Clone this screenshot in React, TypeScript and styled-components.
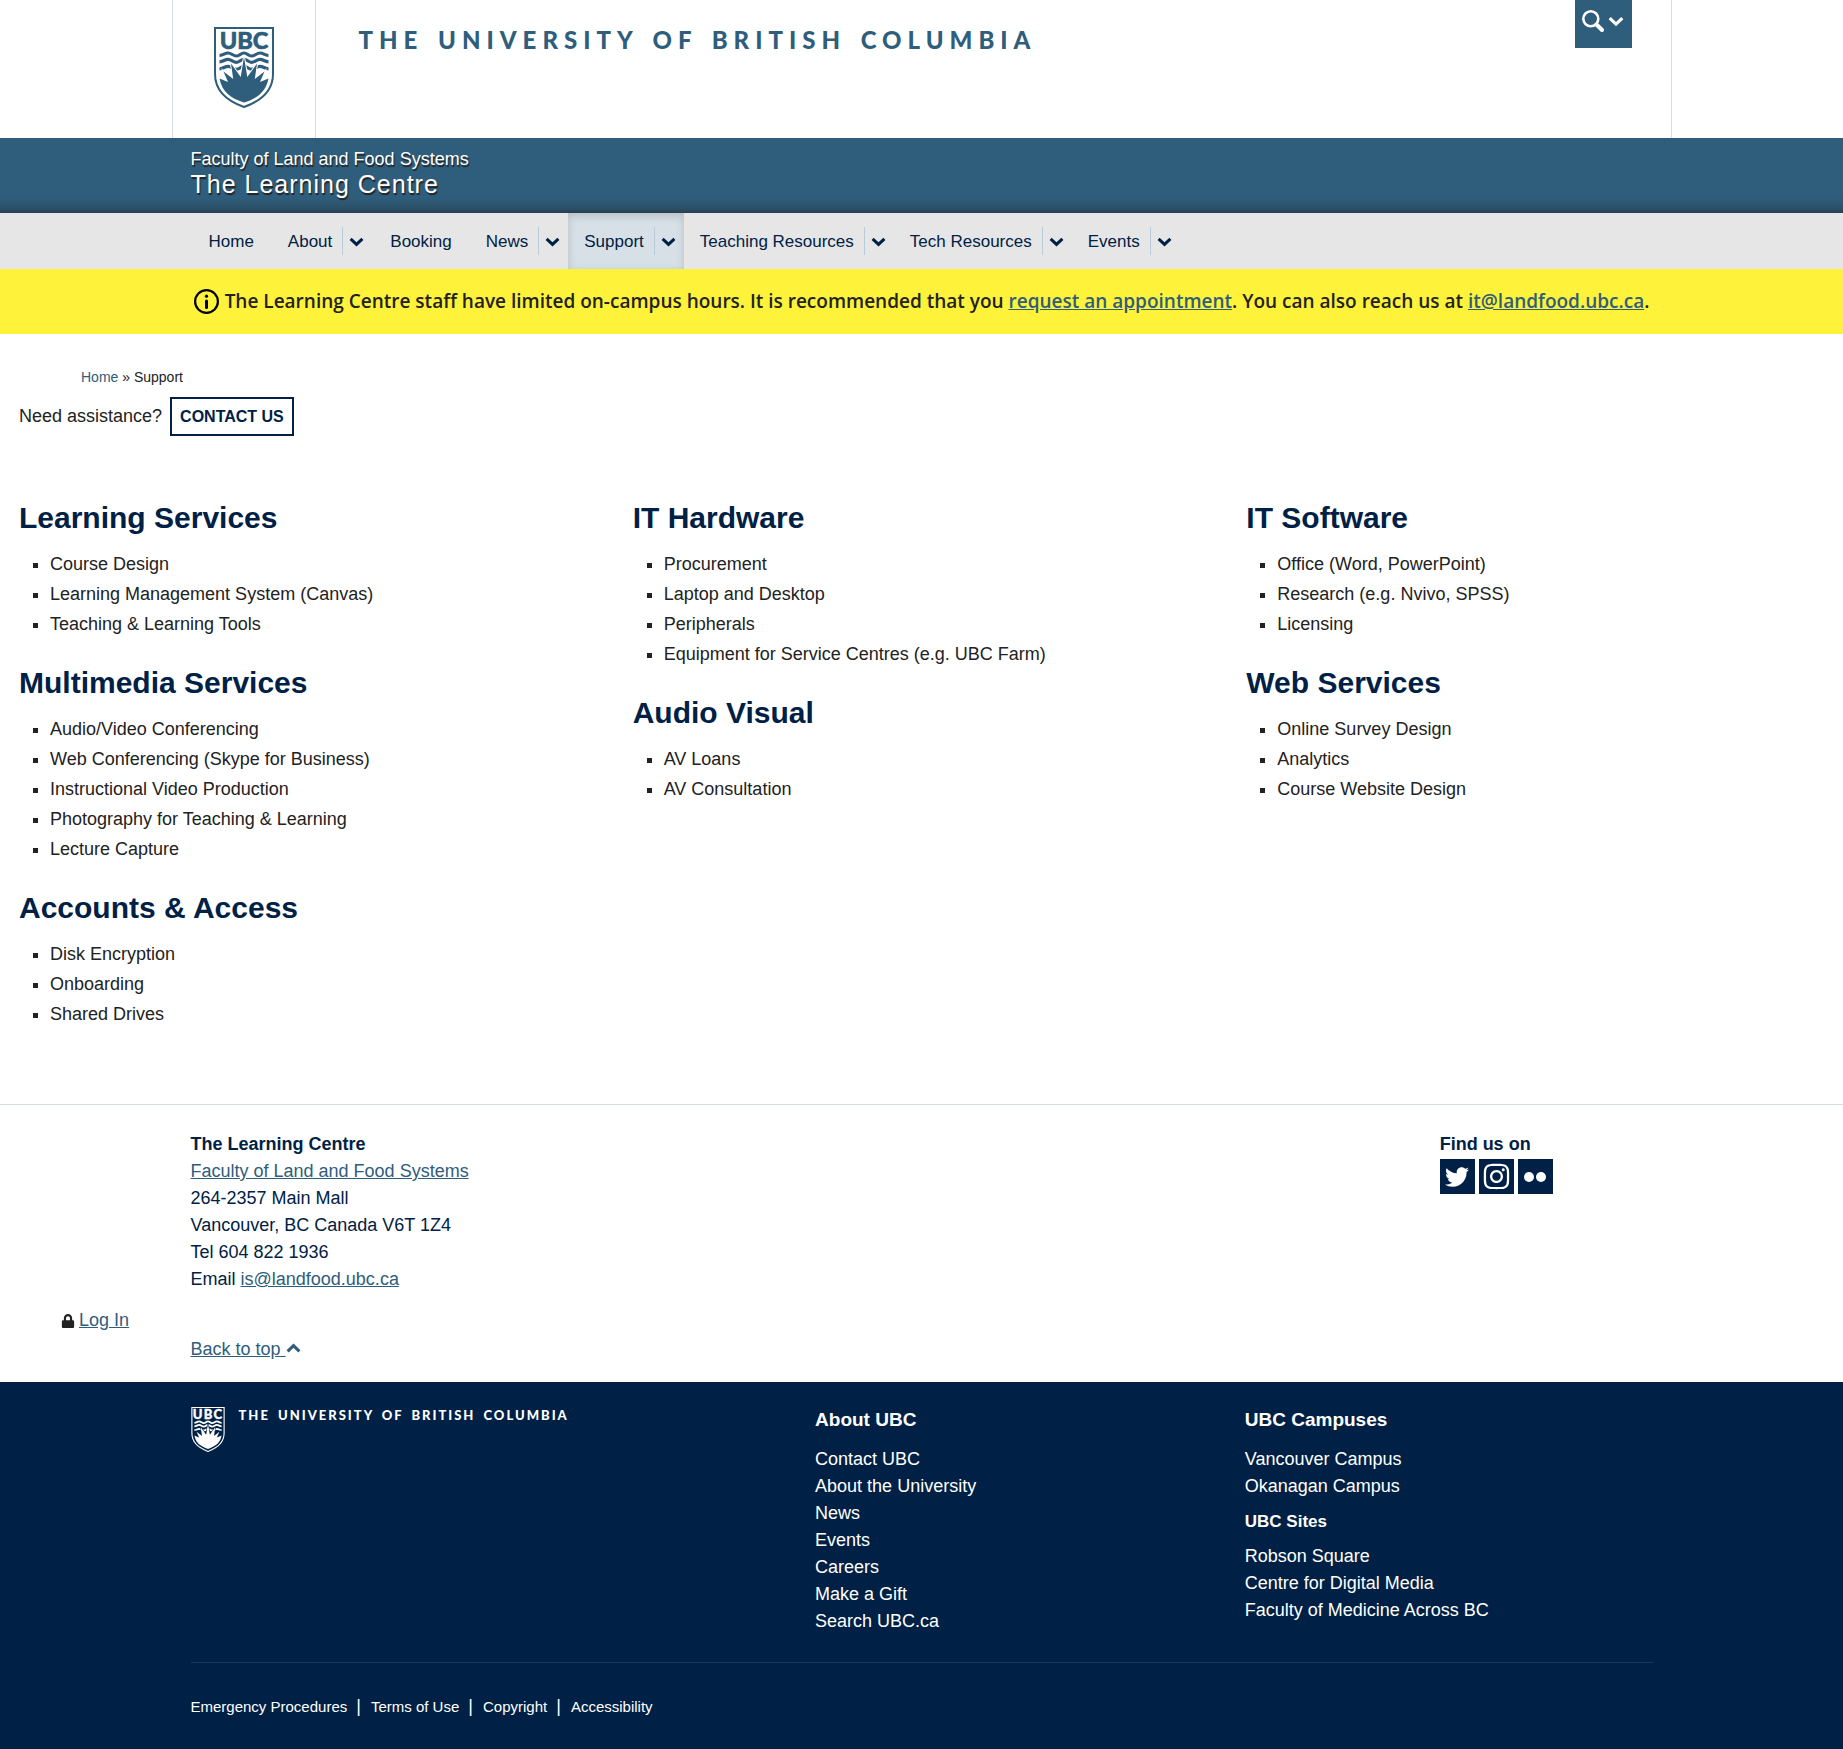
import React from "react";
import styled, { createGlobalStyle, css } from "styled-components";
import { FaInstagram, FaLock, FaTwitter } from "react-icons/fa";

const color = {
  blue: "#2f5d7c",
  navy: "#002145",
  text: "#222222",
  rule: "#d5dde5",
  nav: "#e6e6e6",
  notice: "#fff23a",
};

const GlobalStyle = createGlobalStyle`
  * { box-sizing: border-box; }
  body {
    margin: 0;
    background: #fff;
    color: ${color.text};
    font: 18px/27px "Liberation Sans", Arial, sans-serif;
  }
  h2, h3, p, ul, address { margin: 0; padding: 0; font-style: normal; }
`;

const Container = styled.div`
  max-width: 1500px;
  margin: 0 auto;
  padding: 0 19px;
`;

const HeaderRow = styled.div`
  display: flex;
  align-items: flex-start;
  max-width: 1500px;
  height: 138px;
  margin: 0 auto;
  border: solid ${color.rule};
  border-width: 0 1px;
`;

const CrestLink = styled.a`
  display: flex;
  justify-content: center;
  flex: 0 0 143px;
  height: 100%;
  padding-top: 27px;
  border-right: 1px solid ${color.rule};
`;

const wordmark = css`
  font-family: Lato, sans-serif;
  font-weight: 900;
  text-decoration: none;
  white-space: nowrap;
  word-spacing: 3px;
`;

const HeaderWordmark = styled.a`
  ${wordmark}
  flex: 1;
  padding: 25px 0 0 43px;
  color: ${color.blue};
  font-size: 24px;
  line-height: 30px;
  letter-spacing: 6px;
`;

const SearchButton = styled.button`
  display: flex;
  align-items: center;
  gap: 4px;
  width: 57px;
  height: 48px;
  margin-right: 39px;
  padding: 10px 7px 16px;
  border: 0;
  background: ${color.blue};
  color: #fff;
`;

const UnitBar = styled.div`
  height: 75px;
  padding-top: 10px;
  background: linear-gradient(to bottom, transparent 60px, #2c5069 70px, #27404f 75px) ${color.blue};
  color: #fff;
  text-shadow: 1px 2px 1px #222;
`;

const UnitLink = styled.a`
  display: block;
  color: inherit;
  text-decoration: none;
  line-height: 22px;
`;

const UnitName = styled(UnitLink)`
  font-size: 25px;
  line-height: 29px;
  letter-spacing: 1px;
`;

const NavBar = styled.nav`
  background: ${color.nav};
  font-size: 17px;
`;

const NavList = styled.ul`
  display: flex;
  list-style: none;
`;

const NavItem = styled.li<{ $active?: boolean }>`
  display: flex;
  align-items: center;
  height: 56px;
  ${(p) =>
    p.$active &&
    css`
      background: #d7dfe7;
      box-shadow: inset 0 3px 8px rgba(0, 0, 0, 0.15);
    `}
`;

const NavLink = styled.a<{ $menu?: boolean }>`
  padding: ${(p) => (p.$menu ? "0 10px 0 16px" : "0 18px")};
  color: ${color.navy};
  text-decoration: none;
  white-space: nowrap;
`;

const NavToggle = styled.button`
  display: flex;
  align-items: center;
  width: 30px;
  height: 28px;
  padding: 0 0 0 6px;
  border: 0;
  border-left: 1px solid #b9cbda;
  background: none;
  color: ${color.navy};
`;

const Notice = styled.div`
  display: flex;
  align-items: center;
  justify-content: center;
  gap: 6px;
  min-height: 65px;
  background: ${color.notice};
  font-family: "Open Sans", sans-serif;
  font-size: 19px;
  font-weight: 600;
`;

const Link = styled.a`
  color: ${color.blue};
`;

const Main = styled.main`
  padding: 33px 19px 49px;
`;

const Breadcrumb = styled.nav`
  padding-left: 62px;
  font-size: 14px;
  line-height: 20px;

  a {
    color: ${color.blue};
    text-decoration: none;
  }
`;

const Assistance = styled.div`
  display: flex;
  align-items: center;
  gap: 8px;
  margin: 10px 0 64px;
`;

const ContactLink = styled.a`
  padding: 4px 8px;
  border: 2px solid ${color.navy};
  color: ${color.navy};
  font-size: 16px;
  font-weight: bold;
  text-decoration: none;
`;

const Columns = styled.div`
  display: grid;
  grid-template-columns: repeat(3, 1fr);
  gap: 36px;
`;

const Section = styled.section`
  margin-bottom: 26px;
`;

const SectionTitle = styled.h2`
  margin-bottom: 13px;
  color: ${color.navy};
  font-size: 30px;
  line-height: 36px;
`;

const ServiceList = styled.ul`
  padding-left: 31px;
  list-style: square;
  line-height: 30px;
`;

const UnitFooter = styled.footer`
  padding: 26px 0 19px;
  border-top: 1px solid ${color.rule};
  color: ${color.navy};
`;

const FooterRow = styled.div`
  display: grid;
  grid-template-columns: 1250fr 213fr;
`;

const SocialRow = styled.div`
  display: flex;
  gap: 4px;
  margin-top: 1px;
`;

const SocialLink = styled.a`
  display: flex;
  align-items: center;
  justify-content: center;
  width: 35px;
  height: 35px;
  background: ${color.navy};
  color: #fff;
`;

const Login = styled.div`
  display: flex;
  align-items: center;
  gap: 4px;
  padding: 14px 0 2px 61px;
  color: ${color.text};
`;

const GlobalFooter = styled.footer`
  min-height: 367px;
  background: ${color.navy};
  color: #fff;
`;

const GlobalGrid = styled.div`
  display: grid;
  grid-template-columns: 625fr 430fr 408fr;
  padding: 24px 0 27px;
  border-bottom: 1px solid #1a3858;
`;

const Signature = styled.a`
  ${wordmark}
  display: flex;
  align-items: flex-start;
  gap: 14px;
  padding-top: 1px;
  color: #fff;
  font-size: 13px;
  line-height: 16px;
  letter-spacing: 2px;
`;

const LinkTitle = styled.h3<{ $minor?: boolean }>`
  margin: ${(p) => (p.$minor ? "8px 0" : "0 0 13px")};
  font-size: ${(p) => (p.$minor ? 17 : 19)}px;
  line-height: 27px;
`;

const LinkList = styled.ul`
  list-style: none;

  a {
    color: #fff;
    text-decoration: none;
  }
`;

const LegalList = styled(LinkList)`
  display: flex;
  padding-top: 30px;
  font-size: 15px;

  li + li::before {
    content: "|";
    margin: 0 10px 0 9px;
    font-size: 18px;
  }
`;

const Chevron = ({ size = 15, up = false }: { size?: number; up?: boolean }) => (
  <svg width={size} height={size} viewBox="0 0 15 15" fill="none" stroke="currentColor" strokeWidth="3" aria-hidden="true">
    <path d={up ? "M1.6 11.4 7.5 5.6l5.9 5.8" : "M1.6 4.8 7.5 10.4l5.9-5.6"} />
  </svg>
);

const SearchIcon = () => (
  <svg width="22" height="22" viewBox="0 0 22 22" fill="none" stroke="currentColor" aria-hidden="true">
    <circle cx="8.8" cy="8.8" r="7.5" strokeWidth="2.6" />
    <path d="m14.500 14.500 5.500 5.500" strokeWidth="4" strokeLinecap="round" />
  </svg>
);

const InfoIcon = () => (
  <svg width="25" height="25" viewBox="0 0 25 25" aria-hidden="true">
    <circle cx="12.5" cy="12.5" r="11.4" fill="none" stroke="#000" strokeWidth="2.2" />
    <circle cx="12.5" cy="7.2" r="1.6" />
    <path d="M12.5 12v6.5" stroke="#000" strokeWidth="3" strokeLinecap="round" />
  </svg>
);

const Crest = ({ ink, field, width, height }: { ink: string; field: string; width: number; height: number }) => (
  <svg width={width} height={height} viewBox="0 0 60 81" role="img" aria-label="UBC">
    <path d="M1 1h58v46c0 17-12 27-29 33C13 74 1 64 1 47Z" fill={field} stroke={ink} strokeWidth="2" />
    <text x="30" y="22.3" textAnchor="middle" fontFamily="Lato, sans-serif" fontWeight="900" fontSize="23.5" fill={ink} stroke={ink} strokeWidth="0.6">UBC</text>
    <g fill="none" stroke={ink} strokeWidth="3.2">
      <path d="M5.5 28.5c4 0 5-2.5 8.500-2.500s5 3 8.500 3 4-3 7.500-3 4 3 7.500 3 5-3 8.500-3 4.500 2.500 8.500 2.500" />
      <path d="M5.500 34.800c4 0 5-2.500 8.500-2.500s5 3 8.500 3 4-3 7.500-3 4 3 7.500 3 5-3 8.500-3 4.500 2.500 8.500 2.500" />
      <path d="M5.500 41.800c4 0 5-2.500 8.500-2.500s5 3 8.500 3 4-3 7.500-3 4 3 7.500 3 5-3 8.500-3 4.500 2.500 8.500 2.500" />
    </g>
    <path
      d="M30 30l3.300 20L43 36.500 40.800 52 50.500 44.500 46 55l8.500-3.500C52 65 43 71.500 30 75.500 17 71.500 8 65 5.500 51.500L14 55 9.500 44.500 19.200 52 17 36.500 26.700 50Z"
      fill={ink}
      stroke={field}
      strokeWidth="2"
      paintOrder="stroke"
    />
  </svg>
);

const navItems = [
  { label: "Home" },
  { label: "About", menu: true },
  { label: "Booking" },
  { label: "News", menu: true },
  { label: "Support", menu: true, active: true },
  { label: "Teaching Resources", menu: true },
  { label: "Tech Resources", menu: true },
  { label: "Events", menu: true },
];

const serviceColumns = [
  [
    { title: "Learning Services", items: ["Course Design", "Learning Management System (Canvas)", "Teaching & Learning Tools"] },
    {
      title: "Multimedia Services",
      items: [
        "Audio/Video Conferencing",
        "Web Conferencing (Skype for Business)",
        "Instructional Video Production",
        "Photography for Teaching & Learning",
        "Lecture Capture",
      ],
    },
    { title: "Accounts & Access", items: ["Disk Encryption", "Onboarding", "Shared Drives"] },
  ],
  [
    { title: "IT Hardware", items: ["Procurement", "Laptop and Desktop", "Peripherals", "Equipment for Service Centres (e.g. UBC Farm)"] },
    { title: "Audio Visual", items: ["AV Loans", "AV Consultation"] },
  ],
  [
    { title: "IT Software", items: ["Office (Word, PowerPoint)", "Research (e.g. Nvivo, SPSS)", "Licensing"] },
    { title: "Web Services", items: ["Online Survey Design", "Analytics", "Course Website Design"] },
  ],
];

const aboutLinks = ["Contact UBC", "About the University", "News", "Events", "Careers", "Make a Gift", "Search UBC.ca"];
const campusLinks = ["Vancouver Campus", "Okanagan Campus"];
const siteLinks = ["Robson Square", "Centre for Digital Media", "Faculty of Medicine Across BC"];
const legalLinks = ["Emergency Procedures", "Terms of Use", "Copyright", "Accessibility"];

const Links = ({ items }: { items: string[] }) => (
  <LinkList>
    {items.map((item) => (
      <li key={item}>
        <a href="#">{item}</a>
      </li>
    ))}
  </LinkList>
);

export default function App() {
  return (
    <>
      <GlobalStyle />
      <header>
        <HeaderRow>
          <CrestLink href="#">
            <Crest ink={color.blue} field="#fff" width={60} height={81} />
          </CrestLink>
          <HeaderWordmark href="#">THE UNIVERSITY OF BRITISH COLUMBIA</HeaderWordmark>
          <SearchButton type="button" aria-label="Search">
            <SearchIcon />
            <Chevron size={16} />
          </SearchButton>
        </HeaderRow>
        <UnitBar>
          <Container>
            <UnitLink href="#">Faculty of Land and Food Systems</UnitLink>
            <UnitName href="#">The Learning Centre</UnitName>
          </Container>
        </UnitBar>
        <NavBar>
          <Container>
            <NavList>
              {navItems.map((item) => (
                <NavItem key={item.label} $active={item.active}>
                  <NavLink href="#" $menu={item.menu}>
                    {item.label}
                  </NavLink>
                  {item.menu && (
                    <NavToggle type="button" aria-label={`${item.label} menu`}>
                      <Chevron />
                    </NavToggle>
                  )}
                </NavItem>
              ))}
            </NavList>
          </Container>
        </NavBar>
      </header>

      <Notice>
        <InfoIcon />
        <p>
          The Learning Centre staff have limited on-campus hours. It is recommended that you <Link href="#">request an appointment</Link>. You can
          also reach us at <Link href="#">it@landfood.ubc.ca</Link>.
        </p>
      </Notice>

      <Main>
        <Breadcrumb aria-label="Breadcrumb">
          <a href="#">Home</a> » Support
        </Breadcrumb>
        <Assistance>
          <span>Need assistance?</span>
          <ContactLink href="#">CONTACT US</ContactLink>
        </Assistance>
        <Columns>
          {serviceColumns.map((sections) => (
            <div key={sections[0].title}>
              {sections.map((section) => (
                <Section key={section.title}>
                  <SectionTitle>{section.title}</SectionTitle>
                  <ServiceList>
                    {section.items.map((item) => (
                      <li key={item}>{item}</li>
                    ))}
                  </ServiceList>
                </Section>
              ))}
            </div>
          ))}
        </Columns>
      </Main>

      <UnitFooter>
        <Container>
          <FooterRow>
            <address>
              <strong>The Learning Centre</strong>
              <br />
              <Link href="#">Faculty of Land and Food Systems</Link>
              <br />
              264-2357 Main Mall
              <br />
              Vancouver, BC Canada V6T 1Z4
              <br />
              Tel 604 822 1936
              <br />
              Email <Link href="#">is@landfood.ubc.ca</Link>
            </address>
            <div>
              <strong>Find us on</strong>
              <SocialRow>
                <SocialLink href="#" aria-label="Twitter">
                  <FaTwitter size={24} />
                </SocialLink>
                <SocialLink href="#" aria-label="Instagram">
                  <FaInstagram size={29} />
                </SocialLink>
                <SocialLink href="#" aria-label="Flickr">
                  <svg width="24" height="12" viewBox="0 0 24 12" fill="currentColor" aria-hidden="true">
                    <circle cx="6" cy="6" r="5" />
                    <circle cx="18" cy="6" r="5" />
                  </svg>
                </SocialLink>
              </SocialRow>
            </div>
          </FooterRow>
        </Container>
        <Login>
          <FaLock size={14} />
          <Link href="#">Log In</Link>
        </Login>
        <Container>
          <Link href="#">
            Back to top <Chevron up />
          </Link>
        </Container>
      </UnitFooter>

      <GlobalFooter>
        <Container>
          <GlobalGrid>
            <div>
              <Signature href="#">
                <Crest ink="#fff" field={color.navy} width={34} height={45} />
                <span>THE UNIVERSITY OF BRITISH COLUMBIA</span>
              </Signature>
            </div>
            <div>
              <LinkTitle>About UBC</LinkTitle>
              <Links items={aboutLinks} />
            </div>
            <div>
              <LinkTitle>UBC Campuses</LinkTitle>
              <Links items={campusLinks} />
              <LinkTitle $minor>UBC Sites</LinkTitle>
              <Links items={siteLinks} />
            </div>
          </GlobalGrid>
          <LegalList>
            {legalLinks.map((item) => (
              <li key={item}>
                <a href="#">{item}</a>
              </li>
            ))}
          </LegalList>
        </Container>
      </GlobalFooter>
    </>
  );
}
